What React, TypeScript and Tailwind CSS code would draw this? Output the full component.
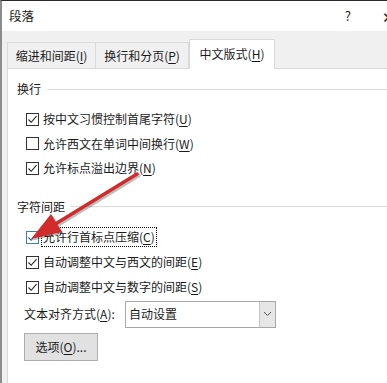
import React from 'react'

const font = { fontFamily: '"Noto Sans CJK SC", "Noto Sans", sans-serif' }

function Acc({ label, k, tail = '' }: { label: string; k: string; tail?: string }) {
  return (
    <span>
      {label}(<span className="underline underline-offset-2">{k}</span>){tail}
    </span>
  )
}

function Check({ checked, hover }: { checked: boolean; hover?: boolean }) {
  return (
    <span
      className={`flex h-[13px] w-[13px] shrink-0 items-center justify-center border bg-white ${
        hover ? 'border-[#3c7fb1]' : 'border-[#333333]'
      }`}
    >
      {checked && (
        <svg width="11" height="11" viewBox="0 0 11 11">
          <path d="M1.5 5.5 L4.2 8.3 L9.5 2.2" fill="none" stroke={hover ? '#2a5f8a' : '#222'} strokeWidth="1.1" />
        </svg>
      )}
    </span>
  )
}

function Row({ h, checked, children, hover, focus }: { h: string; checked: boolean; children: React.ReactNode; hover?: boolean; focus?: boolean }) {
  return (
    <div className={`flex items-center pl-[18px] ${h}`}>
      <Check checked={checked} hover={hover} />
      <span className={`ml-[3px] px-[1px] leading-[18px] ${focus ? 'outline outline-1 outline-dotted outline-black' : ''}`}>
        {children}
      </span>
    </div>
  )
}

function Group({ title }: { title: string }) {
  return (
    <div className="flex h-4 items-center gap-[6px] pl-[9px]">
      <span className="leading-4">{title}</span>
      <div className="h-px flex-1 bg-[#dcdcdc]" />
    </div>
  )
}

export default function App() {
  return (
    <div
      className="relative h-[383px] w-[387px] overflow-hidden border-l-2 border-t border-l-[#8c8c8c] border-t-[#2b2b2b] bg-white text-[12px] text-[#1a1a1a]"
      style={font}
    >
      {/* Title bar */}
      <div className="flex h-[30px] items-center bg-white pl-[7px]">
        <span className="text-[12.5px]">段落</span>
        <span className="ml-auto text-[13px]">?</span>
        <span className="ml-[31px] mr-[-8px] text-[15px] leading-none">✕</span>
      </div>

      {/* Tabs */}
      <div className="flex h-[37px] items-end bg-[#f0f0f0] pl-[5px]">
        <div className="flex h-[26px] w-[89px] items-center justify-center border border-b-0 border-[#d9d9d9]">
          <Acc label="缩进和间距" k="I" />
        </div>
        <div className="flex h-[26px] w-[93px] items-center justify-center border border-b-0 border-l-0 border-[#d9d9d9]">
          <Acc label="换行和分页" k="P" />
        </div>
        <div className="relative -mb-px flex h-[30px] w-[86px] items-center justify-center border border-b-0 border-[#d9d9d9] bg-white pb-[2px]">
          <Acc label="中文版式" k="H" />
        </div>
      </div>

      {/* Panel */}
      <div className="flex h-full">
        <div className="w-[5px] bg-[#f0f0f0]" />
        <div className="flex flex-1 flex-col border-l border-t border-[#d9d9d9] bg-white pt-[12px]">
          <Group title="换行" />
          <div className="mt-[10px]">
            <Row h="h-[24.5px]" checked>
              <Acc label="按中文习惯控制首尾字符" k="U" />
            </Row>
            <Row h="h-[24.5px]" checked={false}>
              <Acc label="允许西文在单词中间换行" k="W" />
            </Row>
            <Row h="h-[24.5px]" checked>
              <Acc label="允许标点溢出边界" k="N" />
            </Row>
          </div>

          <div className="mt-[18px]">
            <Group title="字符间距" />
          </div>
          <div className="mt-[10px]">
            <Row h="h-[25px]" checked hover focus>
              <Acc label="允许行首标点压缩" k="C" />
            </Row>
            <Row h="h-[25px]" checked>
              <Acc label="自动调整中文与西文的间距" k="E" />
            </Row>
            <Row h="h-[25px]" checked>
              <Acc label="自动调整中文与数字的间距" k="S" />
            </Row>
          </div>

          <div className="mt-px flex h-[27px] items-center pl-[16px]">
            <span className="w-[101px]">
              <Acc label="文本对齐方式" k="A" tail=":" />
            </span>
            <div className="flex h-[27px] w-[151px] border border-[#a8a8a8] bg-white">
              <span className="flex flex-1 items-center pl-[3px]">自动设置</span>
              <span className="flex w-[16px] items-center justify-center border-l border-[#c4c4c4] bg-[#e6e6e6]">
                <svg width="9" height="6" viewBox="0 0 9 6">
                  <path d="M1 1 L4.5 4.5 L8 1" fill="none" stroke="#555" strokeWidth="1" />
                </svg>
              </span>
            </div>
          </div>

          <div className="mt-[5px] pl-[16px]">
            <div className="flex h-[28px] w-[74px] items-center justify-center border border-[#adadad] bg-[#e1e1e1]">
              <Acc label="选项" k="O" tail="..." />
            </div>
          </div>
        </div>
      </div>

      {/* Red annotation arrow */}
      <svg className="pointer-events-none absolute left-0 top-0" width="387" height="383" viewBox="0 0 387 383">
        <g transform="translate(1.5 1.5)" opacity="0.25">
          <path d="M135 173 L55 222" stroke="#000" strokeWidth="4" strokeLinecap="round" />
          <path d="M29 238 L60 231 L49 213 Z" fill="#000" />
        </g>
        <path d="M135 173 L55 222" stroke="#d12b2b" strokeWidth="3.5" strokeLinecap="round" />
        <path d="M29 238 L60 231 L49 213 Z" fill="#d12b2b" />
      </svg>
    </div>
  )
}
